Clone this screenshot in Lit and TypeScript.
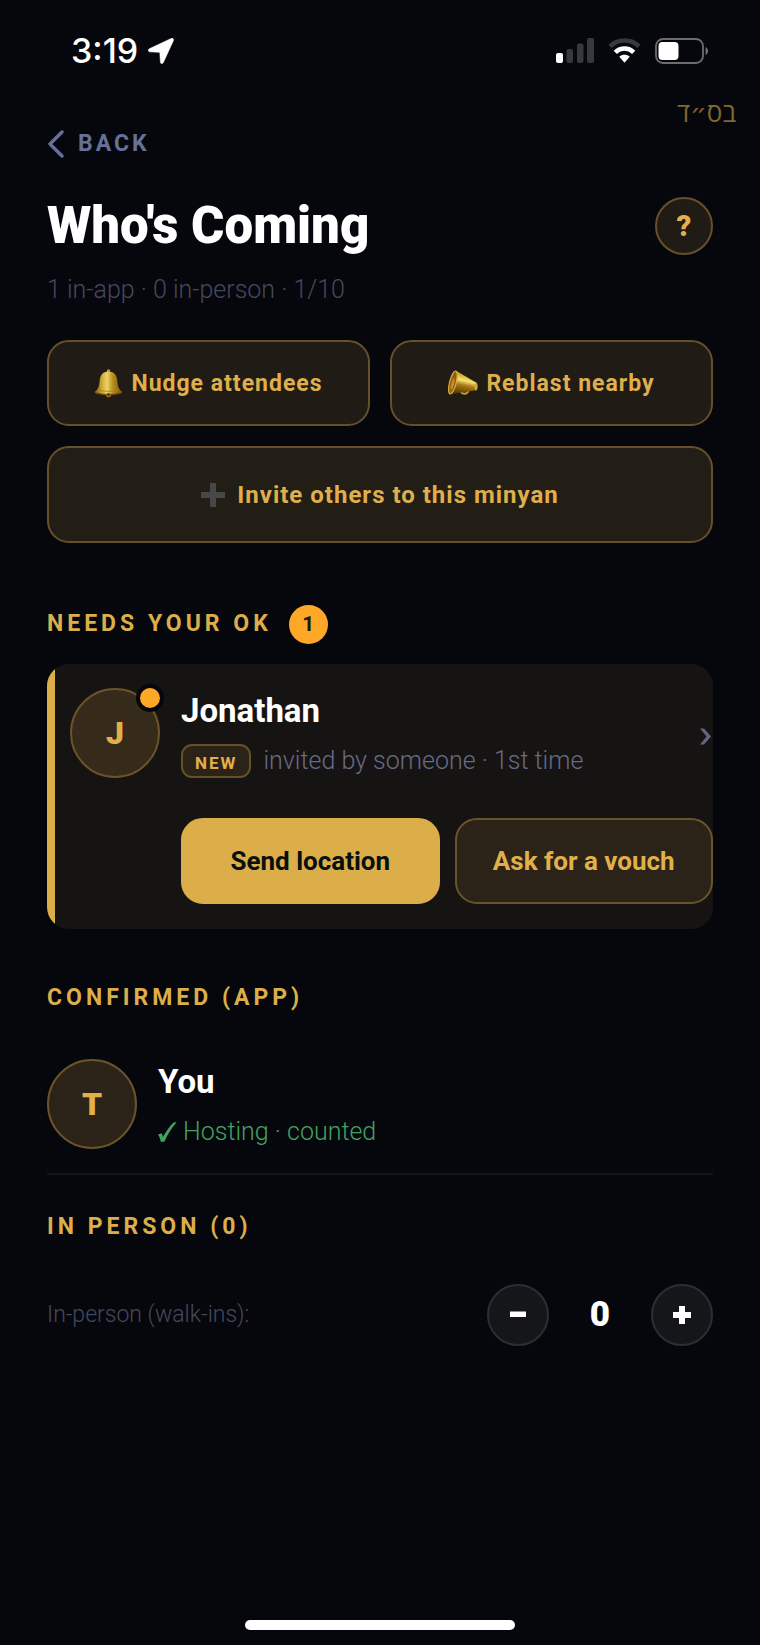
import { LitElement, html, css, svg } from "lit";
import { customElement, state, property } from "lit/decorators.js";

const bell = svg`
  <defs>
    <linearGradient id="bell-body" x1="0" x2="1" y1="0" y2="0">
      <stop offset="0" stop-color="#7d5a10"></stop>
      <stop offset=".28" stop-color="#d6ae3a"></stop>
      <stop offset=".45" stop-color="#ecd468"></stop>
      <stop offset=".66" stop-color="#b98c20"></stop>
      <stop offset="1" stop-color="#77500c"></stop>
    </linearGradient>
  </defs>
  <circle cx="14.5" cy="2" r="1.7" fill="#c99a26"></circle>
  <circle cx="14.5" cy="25.4" r="2.8" fill="#a06a18"></circle>
  <path d="M14.5 2.500C8.500 2.500 6 6.500 5.600 12C5.300 17.500 4.300 20 .8 22.800C.3 24 2 24.600 4.500 25.100C10 26 19 26 24.500 25.100C27 24.600 28.700 24 28.200 22.800C24.700 20 23.700 17.500 23.400 12C23 6.500 20.500 2.500 14.500 2.500Z" fill="url(#bell-body)"></path>
  <path d="M1.500 23.500C8 26 21 26 27.500 23.500" fill="none" stroke="#6d4708" stroke-width="1"></path>
  <path d="M4.500 21C10 22.800 19 22.800 24.500 21" fill="none" stroke="#a97a14" stroke-width=".8"></path>
  <circle cx="14.500" cy="25.500" r="1.400" fill="#5f3b09"></circle>`;

const megaphone = svg`
  <defs>
    <linearGradient id="cone" x1=".6" x2=".35" y1="0" y2="1">
      <stop offset="0" stop-color="#94690f"></stop>
      <stop offset=".2" stop-color="#d3a92f"></stop>
      <stop offset=".42" stop-color="#f6e470"></stop>
      <stop offset=".62" stop-color="#a87b14"></stop>
      <stop offset="1" stop-color="#553807"></stop>
    </linearGradient>
  </defs>
  <path d="M12.500 20C13 24.800 19.500 25 20.500 20" fill="none" stroke="#c99c28" stroke-width="2"></path>
  <path d="M8 .8L28 12.500C29.800 13 29.800 19.500 28 20.300L3.500 24Z" fill="url(#cone)"></path>
  <ellipse cx="4.900" cy="12.500" rx="3.300" ry="11.800" transform="rotate(14 4.900 12.500)" fill="#8d5d14" stroke="#d9b03a" stroke-width="1.200"></ellipse>
  <ellipse cx="4.600" cy="14" rx="1.500" ry="6" transform="rotate(14 4.600 14)" fill="#c98a2a"></ellipse>
  <ellipse cx="28.100" cy="16.400" rx="1.400" ry="3.900" fill="#d6ad35"></ellipse>`;

@customElement("status-bar")
class StatusBar extends LitElement {
  static styles = css`
    :host {
      display: flex;
      justify-content: space-between;
      align-items: center;
      padding: 31px 51px 0 71px;
      color: #fff;
    }
    .group {
      display: flex;
      align-items: center;
      gap: 10px;
    }
    .status {
      gap: 14px;
    }
    .time {
      font: 500 34px/40px Inter, sans-serif;
    }
    svg {
      display: block;
    }
  `;
  render() {
    return html`
      <div class="group">
        <span class="time">3:19</span>
        <svg width="26" height="26" viewBox="0 0 26 26" aria-hidden="true">
          <path
            d="M23.200 .5L1.400 10.800C-.3 11.700 .1 13.600 1.800 13.800L11 14.300Q11.800 14.400 11.900 15.200L12.400 24C12.500 25.900 14.500 26.200 15.300 24.600L25.300 2.800C26 1.200 24.800 -.1 23.200 .5Z"
            fill="#fff"
            stroke="#fff"
            stroke-width=".6"
          ></path>
        </svg>
      </div>
      <div class="group status">
        <svg width="38" height="26" viewBox="0 0 38 26" aria-hidden="true">
          <rect x="0" y="15" width="7" height="10" rx="2" fill="#fff"></rect>
          <g fill="#38393f">
            <rect x="10.500" y="11" width="6.500" height="14" rx="2"></rect>
            <rect x="21" y="5.500" width="6.500" height="19.500" rx="2"></rect>
            <rect x="31" y="0" width="7" height="25" rx="2"></rect>
          </g>
        </svg>
        <svg width="33" height="26" viewBox="0 0 33 26" aria-hidden="true">
          <path d="M2 8.300C10 .6 23 .6 31 8.300" fill="none" stroke="#38393f" stroke-width="4.600"></path>
          <path d="M7.300 14.300C12.500 9.200 20.500 9.200 25.700 14.300" fill="none" stroke="#fff" stroke-width="4.600"></path>
          <path d="M11.300 18.800C14.300 16.200 18.700 16.200 21.700 18.800L17 24.300Q16.500 24.800 16 24.300Z" fill="#fff"></path>
        </svg>
        <svg width="54" height="26" viewBox="0 0 54 26" aria-hidden="true">
          <rect x="1" y="1" width="47" height="24" rx="7" fill="none" stroke="#6c6d73" stroke-width="1.800"></rect>
          <rect x="3.500" y="4" width="20" height="18" rx="4" fill="#fff"></rect>
          <path d="M50.500 9V17C54 15.500 54 10.500 50.500 9Z" fill="#6c6d73"></path>
        </svg>
      </div>
    `;
  }
}

@customElement("section-title")
class SectionTitle extends LitElement {
  @property() count = "";
  static styles = css`
    :host {
      display: flex;
      align-items: center;
      gap: 17px;
      color: #dcae4a;
    }
    h2 {
      margin: 0;
      font: 700 23px/40px Roboto, sans-serif;
      letter-spacing: 4px;
    }
    .badge {
      display: grid;
      place-items: center;
      width: 39px;
      height: 39px;
      border-radius: 50%;
      background: #ffa726;
      color: #1d1808;
      font: 700 21px/24px Roboto, sans-serif;
    }
  `;
  render() {
    return html`<h2><slot></slot></h2>
      ${this.count ? html`<span class="badge">${this.count}</span>` : ""}`;
  }
}

@customElement("app-root")
class AppRoot extends LitElement {
  @state() walkIns = 0;

  static styles = css`
    :host {
      display: flex;
      flex-direction: column;
      min-height: 100vh;
      box-sizing: border-box;
      background: #05070c;
      color: #fff;
      font-family: Roboto, sans-serif;
    }
    * {
      box-sizing: border-box;
    }
    button {
      margin: 0;
      padding: 0;
      font-family: inherit;
      cursor: pointer;
    }
    h1,
    h3,
    p {
      margin: 0;
    }
    .blessing {
      align-self: flex-end;
      margin-top: 23px;
      padding-right: 24px;
      color: #81662f;
      font: 400 26px/36px "Open Sans", "DejaVu Sans", sans-serif;
    }
    main {
      flex: 1;
      display: flex;
      flex-direction: column;
      padding: 0 47px;
    }
    .back {
      align-self: flex-start;
      display: flex;
      align-items: center;
      gap: 14px;
      border: 0;
      background: none;
      color: #67709a;
      font-weight: 700;
      font-size: 23px;
      line-height: 28px;
      letter-spacing: 3px;
    }
    .heading {
      display: flex;
      justify-content: space-between;
      align-items: center;
      margin-top: 39px;
    }
    h1 {
      font-size: 51px;
      line-height: 58px;
      font-weight: 900;
    }
    .help {
      width: 58px;
      height: 58px;
      border: 2px solid #66502a;
      border-radius: 50%;
      background: #211b15;
      color: #e2b04a;
      font-size: 29px;
      font-weight: 900;
    }
    .summary {
      margin-top: 19px;
      color: #46485f;
      font-size: 25px;
      line-height: 32px;
      font-weight: 300;
    }
    .actions {
      display: grid;
      grid-template-columns: 1fr 1fr;
      gap: 20px;
      margin-top: 34px;
    }
    .action {
      display: flex;
      align-items: center;
      justify-content: center;
      gap: 8px;
      height: 86px;
      border: 2px solid #66502a;
      border-radius: 22px;
      background: #211b15;
      color: #deaf4c;
      font-size: 23px;
      font-weight: 700;
      letter-spacing: 1px;
    }
    .wide {
      grid-column: 1 / -1;
      gap: 12px;
      height: 97px;
      background: #231e15;
      font-size: 24px;
    }
    .needs {
      margin-top: 61px;
    }
    .card {
      display: grid;
      grid-template-columns: 90px 1fr auto;
      column-gap: 21px;
      margin-top: 20px;
      padding: 24px 0 25px 23px;
      border-radius: 22px;
      background: linear-gradient(to right, #dcae4a 8px, #151412 8px);
    }
    .avatar {
      position: relative;
      display: grid;
      place-items: center;
      width: 90px;
      height: 90px;
      border: 2px solid #6b5429;
      border-radius: 50%;
      background: #2c2318;
      color: #e2b04a;
      font-size: 32px;
      font-weight: 900;
    }
    .pending {
      background: #362b1a;
    }
    .dot {
      position: absolute;
      top: -6px;
      right: -6px;
      width: 28px;
      height: 28px;
      border: 4px solid #05070c;
      border-radius: 50%;
      background: #ffa726;
    }
    .name {
      font-size: 33px;
      line-height: 46px;
      font-weight: 700;
    }
    .meta {
      display: flex;
      align-items: center;
      gap: 12px;
      margin-top: 10px;
      color: #686a86;
      font-size: 25px;
      line-height: 34px;
      font-weight: 300;
    }
    .tag {
      display: grid;
      place-items: center;
      height: 34px;
      padding: 0 12px;
      border: 2px solid #66502a;
      border-radius: 11px;
      background: #2c2318;
      color: #e2b04a;
      font-size: 17px;
      font-weight: 700;
      letter-spacing: 2px;
    }
    .chevron {
      align-self: center;
      padding: 6px 2px 0 0;
      color: #63647f;
    }
    .chevron svg {
      display: block;
    }
    .choices {
      grid-column: 2 / -1;
      display: flex;
      gap: 15px;
      margin-top: 40px;
    }
    .choice {
      flex: 1 1 0;
      height: 86px;
      border: 2px solid #6b5429;
      border-radius: 22px;
      background: #2c2318;
      color: #e2b04a;
      font-size: 26px;
      font-weight: 700;
    }
    .primary {
      border-color: #dcae4a;
      background: #dcae4a;
      color: #07100f;
    }
    .confirmed {
      margin-top: 49px;
    }
    .row {
      display: flex;
      gap: 21px;
      margin-top: 41px;
      padding-bottom: 24px;
      border-bottom: 2px solid #121418;
    }
    .hosting {
      gap: 6px;
      color: #43a262;
    }
    .in-person {
      margin-top: 32px;
    }
    .counter {
      display: flex;
      align-items: center;
      justify-content: space-between;
      margin-top: 37px;
    }
    .counter-label {
      color: #46485f;
      font-size: 23px;
      line-height: 30px;
      font-weight: 300;
    }
    .stepper {
      display: flex;
      align-items: center;
    }
    .step {
      display: grid;
      place-items: center;
      width: 62px;
      height: 62px;
      border: 2px solid #2d2e32;
      border-radius: 50%;
      background: #15161a;
      color: #fff;
    }
    .value {
      width: 102px;
      text-align: center;
      font-size: 35px;
      line-height: 40px;
      font-weight: 900;
    }
    .home {
      align-self: center;
      width: 270px;
      height: 10px;
      margin-bottom: 15px;
      border-radius: 5px;
      background: #fff;
    }
  `;

  render() {
    return html`
      <status-bar></status-bar>
      <div class="blessing" lang="he" dir="rtl">בס״ד</div>
      <main>
        <button class="back">
          <svg width="17" height="28" viewBox="0 0 17 28" aria-hidden="true">
            <path d="M15 2L3 14L15 26" fill="none" stroke="#67709a" stroke-width="3.400" stroke-linecap="round" stroke-linejoin="round"></path>
          </svg>
          BACK
        </button>
        <div class="heading">
          <h1>Who's Coming</h1>
          <button class="help" aria-label="Help">?</button>
        </div>
        <p class="summary">1 in-app · 0 in-person · 1/10</p>

        <div class="actions">
          <button class="action">
            <svg width="29" height="29" viewBox="0 0 29 29" aria-hidden="true">${bell}</svg>
            Nudge attendees
          </button>
          <button class="action">
            <svg width="30" height="26" viewBox="0 0 30 26" aria-hidden="true">${megaphone}</svg>
            Reblast nearby
          </button>
          <button class="action wide">
            <svg width="24" height="24" viewBox="0 0 24 24" aria-hidden="true">
              <path d="M9 0H15V9H24V15H15V24H9V15H0V9H9Z" fill="#47474a"></path>
            </svg>
            Invite others to this minyan
          </button>
        </div>

        <section-title class="needs" count="1">NEEDS YOUR OK</section-title>
        <div class="card">
          <div class="avatar pending">J<span class="dot"></span></div>
          <div>
            <h3 class="name">Jonathan</h3>
            <p class="meta"><span class="tag">NEW</span>invited by someone · 1st time</p>
          </div>
          <span class="chevron">
            <svg width="11" height="17" viewBox="0 0 11 17" aria-hidden="true">
              <path d="M0 .5H4L11 8.500L4 16.500H0L6.500 8.500Z" fill="currentColor"></path>
            </svg>
          </span>
          <div class="choices">
            <button class="choice primary">Send location</button>
            <button class="choice">Ask for a vouch</button>
          </div>
        </div>

        <section-title class="confirmed">CONFIRMED (APP)</section-title>
        <div class="row">
          <div class="avatar">T</div>
          <div>
            <h3 class="name">You</h3>
            <p class="meta hosting">
              <svg width="19" height="20" viewBox="0 0 19 20" aria-hidden="true">
                <path d="M0 12.500L3.600 11.200C4.300 12.300 4.700 13.500 4.900 15C8 9.500 11.500 4.500 15.800 .2H18.600C13.500 6 9.500 12.500 6.300 19.700H2.800C2.300 17 1.400 14.700 0 12.500Z" fill="#43a262"></path>
              </svg>
              Hosting · counted
            </p>
          </div>
        </div>

        <section-title class="in-person">IN PERSON (${this.walkIns})</section-title>
        <div class="counter">
          <span class="counter-label" id="walkins">In-person (walk-ins):</span>
          <div class="stepper" role="group" aria-labelledby="walkins">
            <button class="step" aria-label="Decrease" @click=${() => (this.walkIns = Math.max(0, this.walkIns - 1))}>
              <svg width="18" height="18" viewBox="0 0 18 18"><path d="M1 5.500H17V11H1Z" fill="#fff"></path></svg>
            </button>
            <output class="value">${this.walkIns}</output>
            <button class="step" aria-label="Increase" @click=${() => (this.walkIns += 1)}>
              <svg width="18" height="18" viewBox="0 0 18 18"><path d="M6 0H12V6H18V12H12V18H6V12H0V6H6Z" fill="#fff"></path></svg>
            </button>
          </div>
        </div>
      </main>
      <div class="home"></div>
    `;
  }
}
